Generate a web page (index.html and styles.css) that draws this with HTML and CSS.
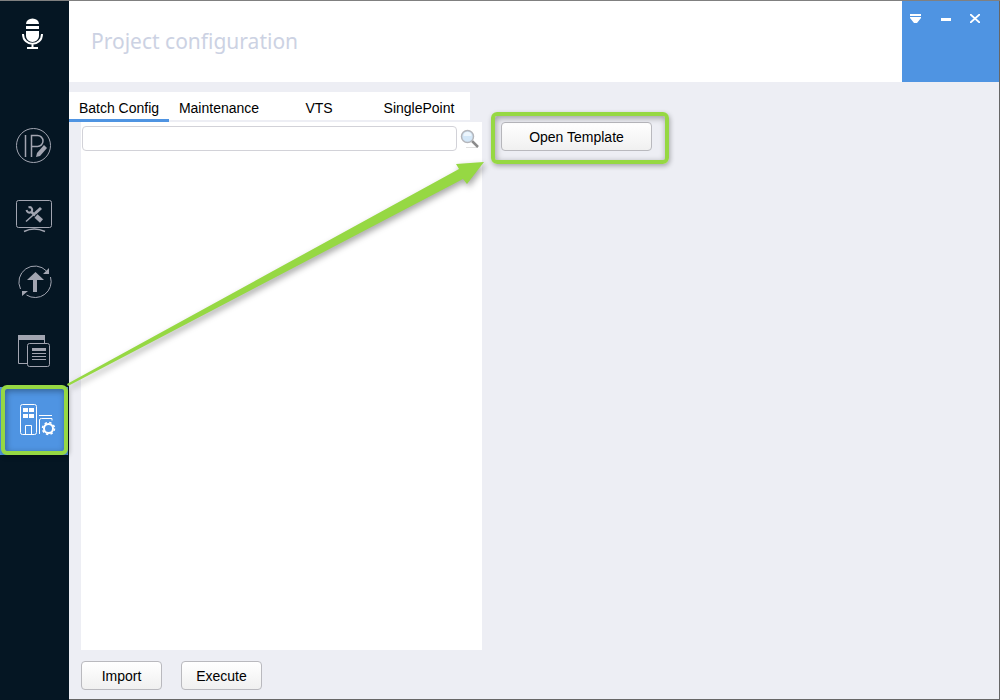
FILE: index.html
```html
<!DOCTYPE html>
<html lang="en">
<head>
    <meta charset="utf-8"/>
    <title>Project configuration</title>
    <meta name="viewport" content="width=device-width, initial-scale=1.0"/>
    <link rel="stylesheet" href="styles.css">
</head>

<body>
<nav class="sidebar">
    <svg class="logo" width="22" height="32" viewBox="0 0 22 32">
        <path d="M4 6a6.500 5.500 0 0 1 13 0zM4 8h13v3H4zM4 13h13v5a6.500 6 0 0 1-13 0z" fill="#fff"/>
        <path d="M1 16c0 13 19 13 19 0M10.500 25v5M5 30h11" fill="none" stroke="#fff" stroke-width="2"/>
    </svg>
    <a class="item" href="#ip" aria-label="Modify IP">
        <svg width="68" height="68" viewBox="0 0 68 68">
            <circle cx="33.500" cy="30.500" r="17"/>
            <path d="M25.500 20v22M31.500 42V20.500h6a5.500 5.500 0 0 1 0 11h-6" stroke-width="1.500"/>
            <path class="solid" d="M36 42l1-4 7-8 3 3-7 8z"/>
        </svg>
    </a>
    <a class="item" href="#device" aria-label="Device config">
        <svg width="68" height="68" viewBox="0 0 68 68">
            <rect x="16.500" y="17.500" width="35" height="27" rx="2"/>
            <path d="M24 48.500q10-5 21 0" stroke-width="1.500"/>
            <path d="M26 38.500l10-9" stroke-width="1.500"/>
            <path d="M35 30.500l6-5.500" stroke-width="3"/>
            <path d="M36 33l5.500 5" stroke-width="4.500"/>
            <path d="M28.500 24.500c3-1.500 5 2.500 2.500 4.500-2 1.500-4 0-4.500-2" stroke-width="2"/>
            <path d="M31 28.500l4 4" stroke-width="2.500"/>
        </svg>
    </a>
    <a class="item" href="#upgrade" aria-label="Upgrade">
        <svg width="68" height="68" viewBox="0 0 68 68">
            <path d="M20.500 38a16 16 0 0 1 26-18M50.500 26a16 16 0 0 1-24 18"/>
            <path class="solid" d="M35.500 21l8.500 8h-7v12h-4V29h-6zM49 17v6h-6zM22 40h6l-6 5z"/>
        </svg>
    </a>
    <a class="item" href="#reset" aria-label="Reset config">
        <svg width="68" height="68" viewBox="0 0 68 68">
            <path d="M27 44.500h-8.500v-28h26V24"/>
            <path class="solid" d="M18 16h27v5H18zM32 29h14v3H32z"/>
            <rect x="27.500" y="24.500" width="22" height="23" rx="2"/>
            <path d="M32 34.500h14M32 37.500h14M32 40.500h14"/>
        </svg>
    </a>
    <a class="item active" href="#project" aria-label="Project configuration">
        <svg width="68" height="68" viewBox="0 0 68 68">
            <rect x="20.500" y="17.500" width="16" height="30" rx="2"/>
            <path class="solid" d="M23 21h5v4h-5zM29 21h5v4h-5zM23 27h5v4h-5zM29 27h5v4h-5z"/>
            <path d="M25.500 47v-8.500h6V47M39 28.500h13M39.500 47V33q0-1.500 2-1.500h10.500v2"/>
            <circle cx="48.500" cy="41.500" r="4.500" stroke-width="2"/>
            <circle cx="48.500" cy="41.500" r="6" stroke-width="1.500" stroke-dasharray="2.400 2.310"/>
        </svg>
    </a>
</nav>

<div class="main">
    <header class="header">
        <h1>Project configuration</h1>
        <div class="controls">
            <button aria-label="Menu">
                <svg width="11" height="9" viewBox="0 0 11 9"><path d="M0 0h11v2H0zM0 3h11v1L7 9H4L0 4z"/></svg>
            </button>
            <button aria-label="Minimize">
                <svg width="10" height="9" viewBox="0 0 10 9"><path d="M0 4h10v3H0z"/></svg>
            </button>
            <button aria-label="Close">
                <svg width="10" height="9" viewBox="0 0 10 9"><path d="M0 0l10 9M10 0L0 9" stroke="#fff" stroke-width="1.800"/></svg>
            </button>
        </div>
    </header>

    <div class="content">
        <section class="left">
            <div class="tabs">
                <button class="active">Batch Config</button>
                <button>Maintenance</button>
                <button>VTS</button>
                <button>SinglePoint</button>
            </div>
            <div class="panel">
                <form class="search">
                    <input type="text" aria-label="Search">
                    <button type="button" aria-label="Search">
                        <svg width="20" height="20" viewBox="0 0 20 20">
                            <path d="M6 18.500h12" stroke="#e0e0e0" stroke-width="1"/>
                            <path d="M12 12l6 6" stroke="#8b8b8b" stroke-width="2.500"/>
                            <circle cx="7.500" cy="7.500" r="6" fill="#d3e7f8" stroke="#b4b6bb" stroke-width="1.500"/>
                            <path d="M3.500 7a4 4 0 0 1 8 0z" fill="#edf6fd"/>
                        </svg>
                    </button>
                </form>
            </div>
            <div class="actions">
                <button class="btn">Import</button>
                <button class="btn">Execute</button>
            </div>
        </section>
        <section class="right">
            <div class="callout">
                <button class="btn wide">Open Template</button>
            </div>
        </section>
    </div>
</div>

<!-- pointer from the menu item to the Open Template button -->
<svg class="arrow" width="430" height="240" viewBox="0 0 430 240">
    <path d="M2 225L394 10 391 5 419 3 402 25 398 20 3 227z" fill="#96d843"/>
</svg>
</body>
</html>
```
FILE: styles.css
```css
* {
    box-sizing: border-box;
}

body {
    margin: 0;
    min-height: 100vh;
    display: flex;
    position: relative;
    font-family: "Liberation Sans", Arial, sans-serif;
    font-size: 14px;
    color: #000;
    background: #edeef4;
    border-top: 1px solid #808080;
}

button {
    font: inherit;
    color: inherit;
    padding: 0;
    border: none;
    background: none;
    cursor: pointer;
}

svg {
    display: block;
}

.sidebar {
    width: 69px;
    flex: none;
    background: #051623;
}

.logo {
    margin: 17px 0 65px 22px;
}

.item {
    display: block;
    width: 68px;
    height: 68px;
    position: relative;
}

.item svg {
    fill: none;
    stroke: #a2a5b1;
}

.item .solid {
    fill: #a2a5b1;
    stroke: none;
}

.item.active {
    background: #4f94e2;
}

.item.active svg {
    stroke: #fff;
}

.item.active .solid {
    fill: #fff;
}

/* green marker frames */
.item.active::after,
.callout::after {
    content: "";
    position: absolute;
    border: 4px solid #96d843;
    border-radius: 6px;
    box-shadow: 1px 2px 5px rgba(0, 0, 0, 0.3), inset 1px 2px 6px rgba(0, 0, 0, 0.35);
    pointer-events: none;
}

.item.active::after {
    inset: -2px 0 0 1px;
}

.callout::after {
    inset: -10px -17px -13px -10px;
}

.main {
    flex: 1;
    display: flex;
    flex-direction: column;
    border-right: 1px solid #666;
    border-bottom: 1px solid #666;
}

.header {
    height: 81px;
    display: flex;
    justify-content: space-between;
    background: #fff;
}

.header h1 {
    margin: 0;
    padding-left: 22px;
    font-family: "Noto Sans", sans-serif;
    font-size: 21px;
    font-weight: normal;
    line-height: 80px;
    color: #ccd2e3;
}

.controls {
    width: 97px;
    padding: 13px 19px 0 8px;
    display: flex;
    justify-content: space-between;
    align-items: flex-start;
    background: #4f94e2;
}

.controls svg {
    fill: #fff;
}

.content {
    flex: 1;
    display: flex;
    padding-top: 10px;
}

.left {
    width: 413px;
    display: flex;
    flex-direction: column;
}

.tabs {
    width: 401px;
    height: 30px;
    display: flex;
    background: #fff;
    border-bottom: 2px solid #edeef4;
}

.tabs button {
    width: 100px;
    height: 30px;
    padding-top: 4px;
    border-bottom: 3px solid transparent;
}

.tabs .active {
    border-color: #4f94e2;
}

.panel {
    flex: 1;
    margin-left: 12px;
    padding: 4px 1px;
    background: #fff;
}

.search {
    display: flex;
    align-items: center;
    gap: 3px;
}

.search input {
    width: 375px;
    height: 25px;
    padding: 0 6px;
    font: inherit;
    border: 1px solid #d2d2d8;
    border-radius: 4px;
}

.actions {
    display: flex;
    gap: 19px;
    padding: 11px 0 9px 12px;
}

.btn {
    width: 81px;
    height: 29px;
    border: 1px solid #b9b9be;
    border-radius: 4px;
    background: linear-gradient(#fff, #f0f0f0);
}

.wide {
    display: block;
    width: 151px;
}

.right {
    padding: 30px 0 0 19px;
}

.callout {
    position: relative;
}

.arrow {
    position: absolute;
    left: 65px;
    top: 158px;
    filter: drop-shadow(2px 3px 3px rgba(0, 0, 0, 0.35));
    pointer-events: none;
}
```
